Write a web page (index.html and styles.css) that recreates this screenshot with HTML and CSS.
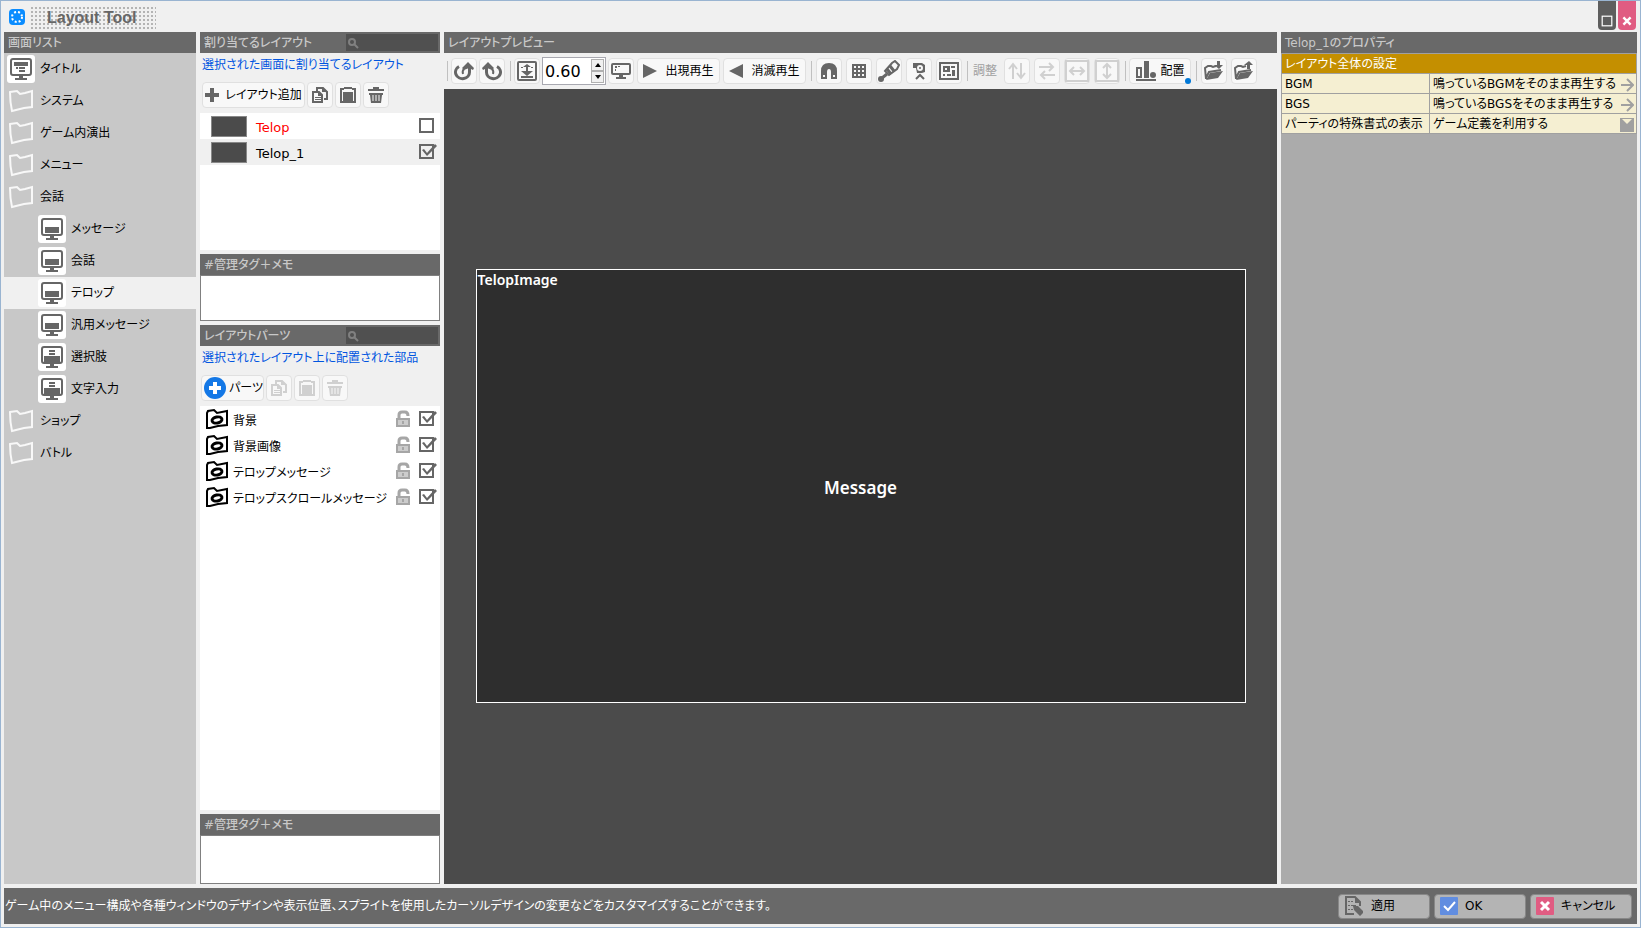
FILE: index.html
```html
<!DOCTYPE html>
<html lang="ja">
<head>
    <meta charset="UTF-8">
    <meta name="viewport" content="width=device-width, initial-scale=1.0">
    <title>Layout Tool</title>
    <link rel="stylesheet" href="styles.css">
</head>
<body>
<!-- shared icons -->
<svg class="sprite" aria-hidden="true">
    <symbol id="i-screen" viewBox="0 0 28 28">
        <rect x="4" y="4" width="20" height="16" rx="2" fill="none" stroke="currentColor" stroke-width="2"/>
        <path d="M7 12h14v6H7zM12 21h4v2h4v2H8v-2h4z"/>
    </symbol>
    <symbol id="i-title" viewBox="0 0 28 28">
        <rect x="4" y="4" width="20" height="16" rx="2" fill="none" stroke="currentColor" stroke-width="2"/>
        <path d="M7 7h14v4H7zM9 12h2v2H9zM12 12h6v2h-6zM12 15h6v2h-6zM12 21h4v2h4v2H8v-2h4z"/>
    </symbol>
    <symbol id="i-choice" viewBox="0 0 28 28">
        <rect x="4" y="4" width="20" height="16" rx="2" fill="none" stroke="currentColor" stroke-width="2"/>
        <path d="M11 7h6v2h-6zM11 10h6v2h-6zM6 13h16v6H6zM12 21h4v2h4v2H8v-2h4z"/>
    </symbol>
    <symbol id="i-folder" viewBox="0 0 28 28">
        <path d="M3 5l7-1 3 3 5-1 7-2v16l-8 1-12 3q-2-9-2-19z" fill="none" stroke="currentColor" stroke-width="2"/>
    </symbol>
    <symbol id="i-part" viewBox="0 0 24 22">
        <path d="M2 5l1-2 6-1 3 3 10-2v14l-9 1-8 2H2z" fill="none" stroke="currentColor" stroke-width="2"/>
        <ellipse cx="12" cy="12" rx="5" ry="3" transform="rotate(-12 12 12)" fill="none" stroke="currentColor" stroke-width="3"/>
    </symbol>
    <symbol id="i-lock" viewBox="0 0 16 18">
        <path d="M4 9V5q0-3 3-3h3q3 0 3 4" fill="none" stroke="currentColor" stroke-width="3"/>
        <path d="M1 8h14v9H1z"/><path d="M3 10h10v5H3z" fill="#ccc"/><path d="M7 11h2v3H7z"/>
    </symbol>
    <symbol id="i-search" viewBox="0 0 12 12">
        <circle cx="5" cy="5" r="3" fill="none" stroke="currentColor" stroke-width="2"/><path d="M7 7l4 4" stroke="currentColor" stroke-width="2"/>
    </symbol>
    <symbol id="i-plus" viewBox="0 0 14 14"><path d="M5 0h4v5h5v4H9v5H5V9H0V5h5z"/></symbol>
    <symbol id="i-addpart" viewBox="0 0 22 22">
        <circle cx="11" cy="11" r="11"/><path d="M9 5h4v4h4v4h-4v4H9v-4H5V9h4z" fill="#fff"/>
    </symbol>
    <symbol id="i-copy" viewBox="0 0 18 18">
        <path d="M6 5V2h6l4 4v7h-3" fill="none" stroke="currentColor" stroke-width="2"/><path d="M11 1v5h6z"/>
        <path d="M2 6h6l3 3v7H2z" fill="none" stroke="currentColor" stroke-width="2"/><path d="M7 5v5h5zM4 11h6v1H4zM4 13h6v1H4z"/>
    </symbol>
    <symbol id="i-paste" viewBox="0 0 18 18">
        <path d="M5 1h8v1h4v15H1V2h4z"/><path d="M3 4h2V3h8v1h2v11h-1V6H4v9h-1z" fill="#f8f8f8"/>
    </symbol>
    <symbol id="i-trash" viewBox="0 0 18 18">
        <path d="M6 1h6v2h5v2H1V3h5zM2 7h14v2h-1l-1 8H4L3 9H2z"/><path d="M6 9v6M9 9v6M12 9v6" stroke="#f8f8f8" stroke-width="1"/>
    </symbol>
    <symbol id="i-redo" viewBox="0 0 20 20">
        <path d="M5 5.500A7 6.500 0 1 0 15.500 11V6" fill="none" stroke="currentColor" stroke-width="3"/>
        <path d="M10 8q-2 2-1 5" fill="none" stroke="currentColor" stroke-width="2"/>
        <path d="M8 7l6-6 6 6-1 2-4-2-5 2z"/>
    </symbol>
    <symbol id="i-fit" viewBox="0 0 20 20">
        <rect x="1" y="1" width="18" height="18" rx="1" fill="none" stroke="currentColor" stroke-width="2"/>
        <path d="M10 3l4 3h-3v4h5l-6 5-6-5h5V6H6zM4 6h2v1H4zM14 6h2v1h-2zM4 15h12v2H4z"/>
    </symbol>
    <symbol id="i-monitor" viewBox="0 0 20 18">
        <rect x="1" y="2" width="18" height="10" rx="1" fill="none" stroke="currentColor" stroke-width="2"/>
        <path d="M4 4h2v2H4zM7 4h2v1H7zM4 7h1v2H4zM8 13h4v2h3v2H5v-2h3z"/>
    </symbol>
    <symbol id="i-play" viewBox="0 0 14 14"><path d="M0 0l14 7-14 7z"/></symbol>
    <symbol id="i-back" viewBox="0 0 14 14"><path d="M14 0v14L0 7z"/></symbol>
    <symbol id="i-magnet" viewBox="0 0 16 16">
        <path d="M0 16V8q0-8 8-8t8 8v8h-6V9q0-3-2-3T6 9v7z"/><path d="M2 12h2v2H2zM12 12h2v2h-2z" fill="#f8f8f8"/>
    </symbol>
    <symbol id="i-grid" viewBox="0 0 14 14">
        <path d="M0 0h14v14H0z"/>
        <path d="M2 2h2v2H2zM6 2h2v2H6zM10 2h2v2h-2zM2 6h2v2H2zM6 6h2v2H6zM10 6h2v2h-2zM2 10h2v2H2zM6 10h2v2H6zM10 10h2v2h-2z" fill="#f8f8f8"/>
    </symbol>
    <symbol id="i-brush" viewBox="0 0 22 22">
        <circle cx="3" cy="19" r="3"/><path d="M4 18l5-4" stroke="currentColor" stroke-width="3"/>
        <path d="M7 11l7-8 3-2 4 4-2 4-8 6z" fill="#f8f8f8" stroke="currentColor" stroke-width="2"/><path d="M9 9l4 5M12 6l4 5" stroke="currentColor" stroke-width="3"/>
    </symbol>
    <symbol id="i-camera" viewBox="0 0 14 18">
        <path d="M1 1h9l3 2v7l-3 1H5L4 6H1z"/><circle cx="8" cy="6" r="2" fill="none" stroke="#f8f8f8" stroke-width="2"/><path d="M4 17l4-4 4 4" fill="none" stroke="currentColor" stroke-width="2"/>
    </symbol>
    <symbol id="i-parts" viewBox="0 0 20 20">
        <rect x="1" y="2" width="18" height="16" fill="none" stroke="currentColor" stroke-width="2"/>
        <path d="M4 5h7v6H4zM12 5h4v2h-4zM13 9h3v6h-3zM4 13h2v2H4zM8 13h4v2H8z"/><path d="M6 7h2v2H6z" fill="#f8f8f8"/>
    </symbol>
    <symbol id="i-updown" viewBox="0 0 20 18">
        <path d="M6 17V3M2 7l4-5 4 5M14 1v14M10 11l4 5 4-5" fill="none" stroke="currentColor" stroke-width="2"/>
    </symbol>
    <symbol id="i-swap" viewBox="0 0 20 18">
        <path d="M2 5h14M12 1l4 4-4 4M18 13H4M8 9l-4 4 4 4" fill="none" stroke="currentColor" stroke-width="2"/>
    </symbol>
    <symbol id="i-boxh" viewBox="0 0 24 22">
        <rect x="1" y="1" width="22" height="20" fill="none" stroke="currentColor" stroke-width="2"/>
        <path d="M5 11h14M9 7l-4 4 4 4M15 7l4 4-4 4" fill="none" stroke="currentColor" stroke-width="2"/>
    </symbol>
    <symbol id="i-boxv" viewBox="0 0 24 22">
        <rect x="1" y="1" width="22" height="20" fill="none" stroke="currentColor" stroke-width="2"/>
        <path d="M12 4v14M8 8l4-4 4 4M8 14l4 4 4-4" fill="none" stroke="currentColor" stroke-width="2"/>
    </symbol>
    <symbol id="i-align" viewBox="0 0 20 20">
        <path d="M1 7h4v9H1z" fill="none" stroke="currentColor" stroke-width="2"/><path d="M8 0h5v17H8zM0 18h20v2H0z"/><circle cx="17" cy="14" r="3"/>
    </symbol>
    <symbol id="i-import" viewBox="0 0 20 20">
        <path d="M2 18L1 7l3-2h3l2 1 3-1M2 17l3-6 12-2" fill="none" stroke="currentColor" stroke-width="2"/>
        <path d="M6 12l13-2-5 7-12 2zM13 0h3v4h3l-4 4-5-4h3z"/>
    </symbol>
    <symbol id="i-export" viewBox="0 0 20 20">
        <path d="M2 18L1 7l3-2h3l2 1 3-1M2 17l3-6 12-2" fill="none" stroke="currentColor" stroke-width="2"/>
        <path d="M6 12l13-2-5 7-12 2zM13 8h3V4h3l-4-4-5 4h3z"/>
    </symbol>
    <symbol id="i-apply" viewBox="0 0 20 20">
        <path d="M10 18H2V1h9l5 5v4" fill="none" stroke="currentColor" stroke-width="2"/>
        <path d="M11 1v6h6zM4 5h2v1H4zM7 5h2v1H7zM4 9h2v1H4zM7 9h5v1H7zM4 13h2v1H4zM7 13h2v1H7zM9 10h5l5 5v2l-3 3-6-6z"/>
    </symbol>
    <symbol id="i-arrow" viewBox="0 0 14 14">
        <path d="M1 7h11M7 1l6 6-6 6" fill="none" stroke="currentColor" stroke-width="2"/>
    </symbol>
</svg>

<header class="titlebar">
    <svg class="app-icon" viewBox="0 0 16 16" aria-hidden="true">
        <rect width="16" height="16" rx="4" fill="#0a8cff"/>
        <circle cx="8" cy="8" r="5" fill="none" stroke="#fff" stroke-width="2" stroke-dasharray="2 2"/>
    </svg>
    <h1>Layout Tool</h1>
    <button class="win-btn" aria-label="最大化"><svg viewBox="0 0 10 10"><rect x="1" y="1" width="8" height="8" fill="none" stroke="#fff"/></svg></button>
    <button class="win-btn close" aria-label="閉じる"><svg viewBox="0 0 10 10"><path d="M2 2l6 6M8 2l-6 6" stroke="#fff" stroke-width="2"/></svg></button>
</header>

<main>
    <nav class="screens">
        <h2>画面リスト</h2>
        <ul class="tree">
            <li><a href="#title"><svg class="tile"><use href="#i-title"/></svg>タイトル</a></li>
            <li><a href="#system"><svg class="folder"><use href="#i-folder"/></svg>システム</a></li>
            <li><a href="#ingame"><svg class="folder"><use href="#i-folder"/></svg>ゲーム内演出</a></li>
            <li><a href="#menu"><svg class="folder"><use href="#i-folder"/></svg>メニュー</a></li>
            <li><a href="#talk"><svg class="folder"><use href="#i-folder"/></svg>会話</a>
                <ul>
                    <li><a href="#message"><svg class="tile"><use href="#i-screen"/></svg>メッセージ</a></li>
                    <li><a href="#conversation"><svg class="tile"><use href="#i-screen"/></svg>会話</a></li>
                    <li><a class="selected" href="#telop"><svg class="tile"><use href="#i-screen"/></svg>テロップ</a></li>
                    <li><a href="#general"><svg class="tile"><use href="#i-screen"/></svg>汎用メッセージ</a></li>
                    <li><a href="#choice"><svg class="tile"><use href="#i-choice"/></svg>選択肢</a></li>
                    <li><a href="#input"><svg class="tile"><use href="#i-choice"/></svg>文字入力</a></li>
                </ul>
            </li>
            <li><a href="#shop"><svg class="folder"><use href="#i-folder"/></svg>ショップ</a></li>
            <li><a href="#battle"><svg class="folder"><use href="#i-folder"/></svg>バトル</a></li>
        </ul>
    </nav>

    <div class="middle">
        <section class="layouts">
            <div class="head">
                <h2>割り当てるレイアウト</h2>
                <label class="search"><svg><use href="#i-search"/></svg><input type="search" aria-label="レイアウト検索"></label>
            </div>
            <p class="hint">選択された画面に割り当てるレイアウト</p>
            <div class="tools">
                <button class="add-layout"><svg class="s14"><use href="#i-plus"/></svg>レイアウト追加</button>
                <button aria-label="コピー"><svg class="s18"><use href="#i-copy"/></svg></button>
                <button aria-label="貼り付け"><svg class="s18"><use href="#i-paste"/></svg></button>
                <button aria-label="削除"><svg class="s18"><use href="#i-trash"/></svg></button>
            </div>
            <ul class="rows">
                <li><span class="thumb"></span><label class="red" for="l1">Telop</label><input type="checkbox" id="l1"></li>
                <li class="current"><span class="thumb"></span><label for="l2">Telop_1</label><input type="checkbox" id="l2" checked></li>
            </ul>
        </section>
        <section class="memo">
            <h2><label for="memo1">#管理タグ＋メモ</label></h2>
            <textarea id="memo1"></textarea>
        </section>
        <section class="parts">
            <div class="head">
                <h2>レイアウトパーツ</h2>
                <label class="search"><svg><use href="#i-search"/></svg><input type="search" aria-label="パーツ検索"></label>
            </div>
            <p class="hint">選択されたレイアウト上に配置された部品</p>
            <div class="tools">
                <button class="add-part"><svg class="s22"><use href="#i-addpart"/></svg>パーツ</button>
                <button disabled aria-label="コピー"><svg class="s18"><use href="#i-copy"/></svg></button>
                <button disabled aria-label="貼り付け"><svg class="s18"><use href="#i-paste"/></svg></button>
                <button disabled aria-label="削除"><svg class="s18"><use href="#i-trash"/></svg></button>
            </div>
            <ul class="rows">
                <li><svg class="part"><use href="#i-part"/></svg><label for="p1">背景</label><svg class="lock"><use href="#i-lock"/></svg><input type="checkbox" id="p1" checked></li>
                <li><svg class="part"><use href="#i-part"/></svg><label for="p2">背景画像</label><svg class="lock"><use href="#i-lock"/></svg><input type="checkbox" id="p2" checked></li>
                <li><svg class="part"><use href="#i-part"/></svg><label for="p3">テロップメッセージ</label><svg class="lock"><use href="#i-lock"/></svg><input type="checkbox" id="p3" checked></li>
                <li><svg class="part"><use href="#i-part"/></svg><label for="p4">テロップスクロールメッセージ</label><svg class="lock"><use href="#i-lock"/></svg><input type="checkbox" id="p4" checked></li>
            </ul>
        </section>
        <section class="memo">
            <h2><label for="memo2">#管理タグ＋メモ</label></h2>
            <textarea id="memo2"></textarea>
        </section>
    </div>

    <section class="preview">
        <h2>レイアウトプレビュー</h2>
        <div class="toolbar">
            <div class="group">
                <button aria-label="やり直し"><svg class="s20"><use href="#i-redo"/></svg></button>
                <button aria-label="元に戻す"><svg class="s20 flip"><use href="#i-redo"/></svg></button>
            </div>
            <div class="group">
                <button aria-label="全体表示"><svg class="s20"><use href="#i-fit"/></svg></button>
                <div class="zoom">
                    <input type="number" id="zoom" value="0.60" step="0.05" aria-label="倍率">
                    <div>
                        <button aria-label="拡大"><svg viewBox="0 0 6 4"><path d="M0 4l3-4 3 4z"/></svg></button>
                        <button aria-label="縮小"><svg viewBox="0 0 6 4"><path d="M0 0h6L3 4z"/></svg></button>
                    </div>
                </div>
                <button aria-label="等倍"><svg class="s20"><use href="#i-monitor"/></svg></button>
                <button class="play"><svg class="s14"><use href="#i-play"/></svg>出現再生</button>
                <button class="play"><svg class="s14"><use href="#i-back"/></svg>消滅再生</button>
            </div>
            <div class="group wide">
                <button aria-label="スナップ"><svg class="s16"><use href="#i-magnet"/></svg></button>
                <button aria-label="グリッド"><svg class="s14"><use href="#i-grid"/></svg></button>
                <button aria-label="色"><svg class="s22"><use href="#i-brush"/></svg></button>
                <button aria-label="カメラ"><svg class="s18"><use href="#i-camera"/></svg></button>
                <button aria-label="部品"><svg class="s20"><use href="#i-parts"/></svg></button>
            </div>
            <div class="group wide">
                <span class="adjust">調整</span>
                <button disabled aria-label="上下入れ替え"><svg class="s20"><use href="#i-updown"/></svg></button>
                <button disabled aria-label="左右入れ替え"><svg class="s20"><use href="#i-swap"/></svg></button>
                <button disabled aria-label="幅を揃える"><svg class="s24"><use href="#i-boxh"/></svg></button>
                <button disabled aria-label="高さを揃える"><svg class="s24"><use href="#i-boxv"/></svg></button>
            </div>
            <div class="group">
                <button class="place"><svg class="s20"><use href="#i-align"/></svg>配置</button>
            </div>
            <div class="group wide">
                <button aria-label="読み込み"><svg class="s20"><use href="#i-import"/></svg></button>
                <button aria-label="書き出し"><svg class="s20"><use href="#i-export"/></svg></button>
            </div>
        </div>
        <div class="canvas">
            <div class="stage">
                <span class="telop-image">TelopImage</span>
                <span class="message">Message</span>
            </div>
        </div>
    </section>

    <section class="props">
        <h2>Telop_1のプロパティ</h2>
        <table>
            <colgroup>
                <col class="name">
                <col>
            </colgroup>
            <thead>
                <tr><th colspan="2">レイアウト全体の設定</th></tr>
            </thead>
            <tbody>
                <tr><td>BGM</td><td><button>鳴っているBGMをそのまま再生する<svg class="s14"><use href="#i-arrow"/></svg></button></td></tr>
                <tr><td>BGS</td><td><button>鳴っているBGSをそのまま再生する<svg class="s14"><use href="#i-arrow"/></svg></button></td></tr>
                <tr><td><label for="party">パーティの特殊書式の表示</label></td><td><select id="party"><option>ゲーム定義を利用する</option></select></td></tr>
            </tbody>
        </table>
    </section>
</main>

<footer>
    <p>ゲーム中のメニュー構成や各種ウィンドウのデザインや表示位置、スプライトを使用したカーソルデザインの変更などをカスタマイズすることができます。</p>
    <button><svg class="s20"><use href="#i-apply"/></svg>適用</button>
    <button><svg class="s18" viewBox="0 0 18 18"><rect width="18" height="18" rx="1" fill="#618de0"/><path d="M4 9l4 4 7-8" fill="none" stroke="#fff" stroke-width="2"/></svg>OK</button>
    <button class="cancel"><svg class="s18" viewBox="0 0 18 18"><rect width="18" height="18" rx="1" fill="#e05c82"/><path d="M5 5l8 8M13 5l-8 8" stroke="#fff" stroke-width="3"/></svg>キャンセル</button>
</footer>
</body>
</html>
```

FILE: styles.css
```css
* {
    box-sizing: border-box;
}

html {
    height: 100%;
}

body {
    margin: 0;
    height: 100%;
    padding: 0 3px 3px;
    border: 1px solid #99b4d1;
    background: #f0f0f0;
    color: #000;
    font-family: "DejaVu Sans", "Noto Sans CJK JP", sans-serif;
    font-size: 12px;
    font-feature-settings: "palt";
    line-height: 16px;
    display: flex;
    flex-direction: column;
}

h1, h2, p, ul {
    margin: 0;
    padding: 0;
}

ul {
    list-style: none;
}

button, input, select, textarea {
    font: inherit;
    font-feature-settings: inherit;
    color: inherit;
    margin: 0;
}

button {
    display: flex;
    align-items: center;
    justify-content: center;
    padding: 0;
    white-space: nowrap;
}

svg {
    fill: currentColor;
    flex: none;
    display: block;
}

.sprite {
    display: none;
}

.s14 { width: 14px; height: 14px; }
.s16 { width: 16px; height: 16px; }
.s18 { width: 18px; height: 18px; }
.s20 { width: 20px; height: 20px; }
.s22 { width: 22px; height: 22px; }
.s24 { width: 24px; height: 24px; }

.flip {
    transform: scaleX(-1);
}

/* title bar */
.titlebar {
    flex: none;
    height: 31px;
    display: flex;
    align-items: flex-start;
    gap: 2px;
}

.app-icon {
    width: 16px;
    height: 16px;
    margin: 8px 2px 0 5px;
}

h1 {
    margin: 6px auto 0 0;
    width: 127px;
    height: 22px;
    padding-left: 18px;
    background: conic-gradient(#b4b4b4 25%, transparent 0) 0 0 / 4px 4px;
    color: #666;
    font-family: Impact, "Liberation Sans Narrow", "Liberation Sans", sans-serif;
    font-size: 16px;
    line-height: 22px;
    white-space: nowrap;
}

.win-btn {
    width: 18px;
    height: 29px;
    border: 0;
    border-radius: 0 0 4px 4px;
    background: #5e5e5e;
    align-items: flex-end;
    padding-bottom: 3px;
}

.win-btn svg {
    width: 12px;
    height: 12px;
}

.win-btn.close {
    background: #e05c82;
    margin-right: 1px;
}

main {
    flex: 1;
    min-height: 0;
    display: grid;
    grid-template-columns: 192px 240px 1fr 356px;
    gap: 4px;
}

h2 {
    flex: none;
    height: 21px;
    padding-left: 4px;
    background: #696969;
    color: #c8c8c8;
    font-size: 12px;
    font-weight: 500;
    line-height: 22px;
    white-space: nowrap;
}

/* screen list */
.screens {
    background: #c8c8c8;
}

.tree a {
    display: flex;
    align-items: center;
    gap: 5px;
    height: 32px;
    padding-left: 3px;
    color: #000;
    text-decoration: none;
}

.tree ul a {
    padding-left: 34px;
}

.tree a.selected {
    background: #f0f0f0;
}

.tile, .folder {
    width: 28px;
    height: 28px;
    color: #666;
}

.tile {
    background: #fff;
    border-radius: 3px;
}

.folder {
    color: #f8f8f8;
}

/* layouts and parts */
.middle {
    display: flex;
    flex-direction: column;
    gap: 4px;
    min-height: 0;
}

.layouts {
    flex: none;
    height: 218px;
}

.parts {
    flex: 1;
}

.layouts, .parts, .memo {
    display: flex;
    flex-direction: column;
}

.head {
    display: flex;
    justify-content: space-between;
    background: #696969;
    padding-right: 2px;
}

.search {
    display: flex;
    align-items: center;
    width: 92px;
    height: 17px;
    margin-top: 2px;
    padding-left: 1px;
    background: #505050;
    color: #808080;
}

.search svg {
    width: 12px;
    height: 12px;
}

.search input {
    width: 70px;
    border: 0;
    outline: 0;
    padding: 0 2px;
    background: none;
    color: #fff;
}

.hint {
    padding: 4px 2px;
    height: 26px;
    color: #0055e0;
    white-space: nowrap;
}

.tools {
    display: flex;
    gap: 2px;
    padding: 3px 2px 5px;
}

.parts .tools {
    padding-left: 1px;
}

.tools button, .toolbar .group > button {
    width: 26px;
    height: 26px;
    border: 1px solid #e0e0e0;
    border-radius: 4px;
    background: #f8f8f8;
    color: #000;
}

.tools svg, .toolbar svg {
    color: #666;
}

.tools button:disabled svg, .toolbar button:disabled svg {
    color: #d0d0d0;
}

.tools .add-layout {
    width: 103px;
    gap: 6px;
}

.tools .add-part {
    width: 63px;
    gap: 3px;
    padding-left: 2px;
}

.tools .add-part svg {
    color: #1478e6;
}

.rows {
    flex: 1;
    background: #fff;
}

.rows li {
    display: flex;
    align-items: center;
    height: 26px;
    padding: 0 3px 0 11px;
}

.parts .rows li {
    padding-left: 5px;
}

.rows .current {
    background: #f0f0f0;
}

.rows label {
    flex: 1;
    padding: 3px 0 0 9px;
    font-size: 13px;
    white-space: nowrap;
}

.parts .rows label {
    padding-left: 4px;
    font-size: 12px;
}

.red {
    color: #f00;
}

.thumb {
    width: 36px;
    height: 21px;
    border: 1px solid #888;
    background: #4b4b4b;
}

.part {
    width: 24px;
    height: 22px;
}

.lock {
    width: 16px;
    height: 18px;
    margin-right: 8px;
    color: #a6a6a6;
}

.rows input {
    appearance: none;
    width: 18px;
    height: 16px;
    background: linear-gradient(#666, #666) 0 0 / 15px 2px no-repeat,
        linear-gradient(#666, #666) 0 13px / 15px 2px no-repeat,
        linear-gradient(#666, #666) 0 0 / 2px 15px no-repeat,
        linear-gradient(#666, #666) 13px 0 / 2px 15px no-repeat;
}

.rows input:checked::before {
    content: "";
    display: block;
    width: 18px;
    height: 14px;
    background: #666;
    clip-path: polygon(3px 6px, 5px 5px, 8px 9px, 16px 0, 18px 2px, 8px 12px);
}

.memo textarea {
    display: block;
    width: 100%;
    height: 46px;
    border: 1px solid #808080;
    border-radius: 0;
    background: #fff;
    resize: none;
}

.memo:last-child textarea {
    height: 49px;
}

/* preview */
.preview {
    display: flex;
    flex-direction: column;
    min-width: 0;
}

.toolbar {
    flex: none;
    display: flex;
    align-items: center;
    gap: 5px;
    height: 36px;
    padding-left: 3px;
}

.group {
    display: flex;
    align-items: center;
    gap: 2px;
}

.group.wide {
    gap: 4px;
}

.group::before {
    content: "";
    width: 1px;
    height: 20px;
    margin-right: 1px;
    background: #c0c0c0;
}

.group.wide::before {
    margin-right: 0;
}

.zoom {
    display: flex;
    width: 64px;
    height: 28px;
    padding: 1px;
    border: 1px solid #a8a8b0;
    background: #fff;
}

.zoom input {
    width: 47px;
    border: 0;
    padding: 0 0 0 1px;
    outline: 0;
    font-size: 16px;
    appearance: textfield;
}

.zoom input::-webkit-inner-spin-button {
    display: none;
}

.zoom button {
    width: 13px;
    height: 12px;
    border: 1px solid #b0b0b0;
    background: #f0f0f0;
}

.zoom svg {
    width: 6px;
    height: 4px;
    color: #000;
}

.toolbar .group > .play {
    width: 83px;
    gap: 8px;
    margin-left: 1px;
}

.adjust {
    padding: 0 3px 0 1px;
    color: #a0a0a0;
}

.toolbar .group > .place {
    position: relative;
    width: 62px;
    gap: 5px;
}

.place::after {
    content: "";
    position: absolute;
    right: -1px;
    bottom: -1px;
    width: 6px;
    height: 6px;
    border-radius: 50%;
    background: #0078d7;
}

.canvas {
    flex: 1;
    display: flex;
    align-items: center;
    justify-content: center;
    padding-bottom: 2px;
    background: #4b4b4b;
}

/* game screen, 1280x720 at the zoom factor */
.stage {
    --zoom: 0.6;
    width: calc(1280px * var(--zoom) + 2px);
    height: calc(720px * var(--zoom) + 2px);
    display: grid;
    grid-template-rows: 1fr auto 1fr;
    border: 1px solid #fff;
    background: #2e2e2e;
    color: #fff;
    font-family: "Noto Sans", sans-serif;
    font-weight: 600;
}

.telop-image {
    padding: 2px 1px;
    font-size: 14px;
}

.message {
    padding-top: 4px;
    font-size: 17px;
    line-height: 24px;
    text-align: center;
}

/* properties */
.props {
    background: #ababab;
}

table {
    width: 100%;
    table-layout: fixed;
    border-collapse: collapse;
}

.name {
    width: 148px;
}

th, td {
    height: 20px;
    padding: 2px 0 0 3px;
    border: 1px solid #a0a0a0;
    background: #f5efd2;
    font-size: 12px;
    line-height: 17px;
    text-align: left;
    white-space: nowrap;
}

th {
    background: #c48f00;
    color: #fff;
    font-weight: 400;
}

td button, td select {
    width: 100%;
    height: 17px;
    border: 0;
    padding: 0 2px 0 0;
    background: none;
    justify-content: space-between;
}

td svg {
    color: #a0a0a0;
}

td select {
    appearance: none;
    display: block;
    background: linear-gradient(#a0a0a0, #a0a0a0) right 2px center / 14px 14px no-repeat;
}

td:has(select) {
    position: relative;
}

/* drop-down mark */
td:has(select)::after {
    content: "";
    position: absolute;
    right: 4px;
    top: 5px;
    border: 5px solid transparent;
    border-top-color: #f5efd2;
    pointer-events: none;
}

/* status bar */
footer {
    flex: none;
    display: flex;
    align-items: center;
    gap: 4px;
    height: 36px;
    margin-top: 4px;
    padding: 0 5px 0 1px;
    background: #696969;
    color: #fff;
}

footer p {
    flex: 1;
    white-space: nowrap;
}

footer button {
    width: 92px;
    height: 25px;
    padding-left: 5px;
    gap: 7px;
    justify-content: flex-start;
    border: 1px solid #888;
    border-radius: 4px;
    background: #b4b4b4;
    color: #000;
}

footer button svg {
    color: #666;
}

footer .cancel {
    width: 102px;
}
```
